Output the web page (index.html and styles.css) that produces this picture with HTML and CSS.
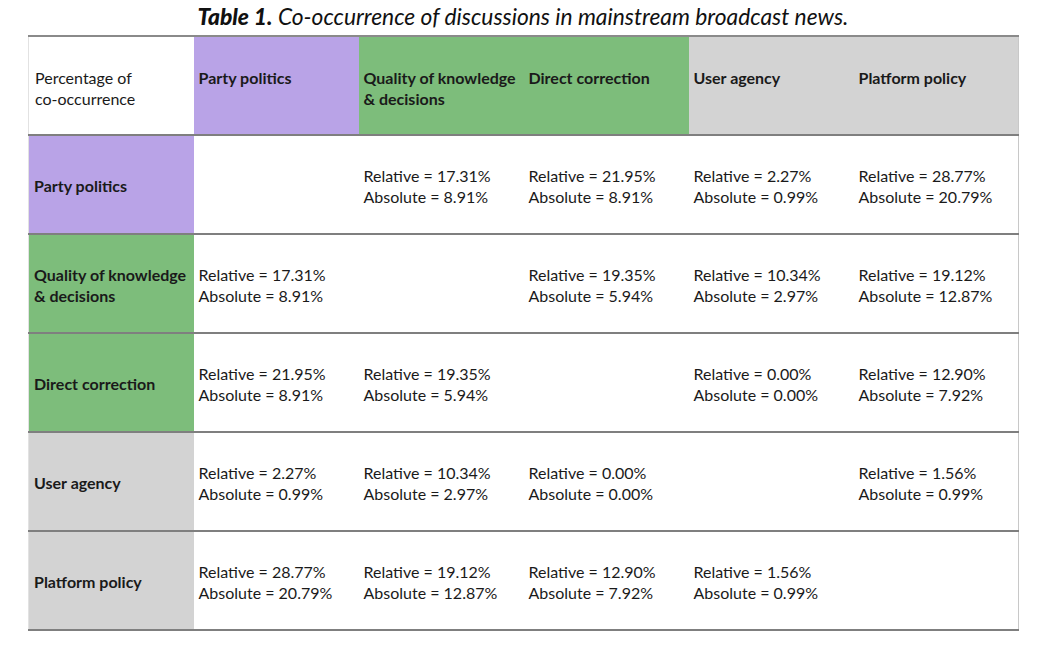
FILE: index.html
```html
<!DOCTYPE html>
<html>
<head>
<meta charset="utf-8">
<link rel="stylesheet" href="styles.css">
</head>
<body>
<div class="page">
  <h1 class="title"><b>Table 1.</b> Co-occurrence of discussions in mainstream broadcast news.</h1>
  <table class="tbl">
    <colgroup>
      <col class="c"><col class="c"><col class="c"><col class="c"><col class="c"><col class="c">
    </colgroup>
    <thead>
      <tr class="head">
        <th class="corner">Percentage of<br>co-occurrence</th>
        <th class="purple">Party politics</th>
        <th class="green">Quality of knowledge<br>&amp; decisions</th>
        <th class="green">Direct correction</th>
        <th class="gray">User agency</th>
        <th class="gray">Platform policy</th>
      </tr>
    </thead>
    <tbody>
      <tr>
        <th class="purple">Party politics</th>
        <td></td>
        <td>Relative = 17.31%<br>Absolute = 8.91%</td>
        <td>Relative = 21.95%<br>Absolute = 8.91%</td>
        <td>Relative = 2.27%<br>Absolute = 0.99%</td>
        <td>Relative = 28.77%<br>Absolute = 20.79%</td>
      </tr>
      <tr>
        <th class="green">Quality of knowledge<br>&amp; decisions</th>
        <td>Relative = 17.31%<br>Absolute = 8.91%</td>
        <td></td>
        <td>Relative = 19.35%<br>Absolute = 5.94%</td>
        <td>Relative = 10.34%<br>Absolute = 2.97%</td>
        <td>Relative = 19.12%<br>Absolute = 12.87%</td>
      </tr>
      <tr>
        <th class="green">Direct correction</th>
        <td>Relative = 21.95%<br>Absolute = 8.91%</td>
        <td>Relative = 19.35%<br>Absolute = 5.94%</td>
        <td></td>
        <td>Relative = 0.00%<br>Absolute = 0.00%</td>
        <td>Relative = 12.90%<br>Absolute = 7.92%</td>
      </tr>
      <tr>
        <th class="gray">User agency</th>
        <td>Relative = 2.27%<br>Absolute = 0.99%</td>
        <td>Relative = 10.34%<br>Absolute = 2.97%</td>
        <td>Relative = 0.00%<br>Absolute = 0.00%</td>
        <td></td>
        <td>Relative = 1.56%<br>Absolute = 0.99%</td>
      </tr>
      <tr>
        <th class="gray">Platform policy</th>
        <td>Relative = 28.77%<br>Absolute = 20.79%</td>
        <td>Relative = 19.12%<br>Absolute = 12.87%</td>
        <td>Relative = 12.90%<br>Absolute = 7.92%</td>
        <td>Relative = 1.56%<br>Absolute = 0.99%</td>
        <td></td>
      </tr>
    </tbody>
  </table>
</div>
</body>
</html>
```
FILE: styles.css
```css
html, body {
  margin: 0;
  padding: 0;
  background: #ffffff;
}
body {
  font-family: "Lato", "Open Sans", sans-serif;
  color: #1a1a1a;
}
.page {
  width: 990px;
  padding: 3px 0 0 28px;
}
.title {
  margin: 0 0 6px 0;
  font-size: 22.8px;
  line-height: 26px;
  font-weight: normal;
  font-style: italic;
  text-align: center;
  color: #111;
}
.title b {
  font-weight: 900;
}
.tbl {
  width: 990px;
  table-layout: fixed;
  border-collapse: collapse;
  border-top: 2px solid #8a8a8a;
  border-left: 1px solid #e2e2e2;
  border-right: 1px solid #c8c8c8;
  font-size: 16px;
  line-height: 21px;
}
.c {
  width: 165px;
}
.tbl tr {
  border-bottom: 2px solid #7f7f7f;
}
.tbl th, .tbl td {
  text-align: left;
  padding: 2px 0 0 5px;
  vertical-align: middle;
  height: 95px;
}
.tbl th {
  font-weight: bold;
}
.head th {
  vertical-align: top;
  padding-top: 30px;
  height: 67px;
}
.head th.corner {
  font-weight: normal;
  padding-left: 6px;
}
tbody th {
  padding-left: 6px;
}
.purple { background: #b9a3e7; }
.green { background: #7dbd7b; }
.gray { background: #d3d3d3; }
```
